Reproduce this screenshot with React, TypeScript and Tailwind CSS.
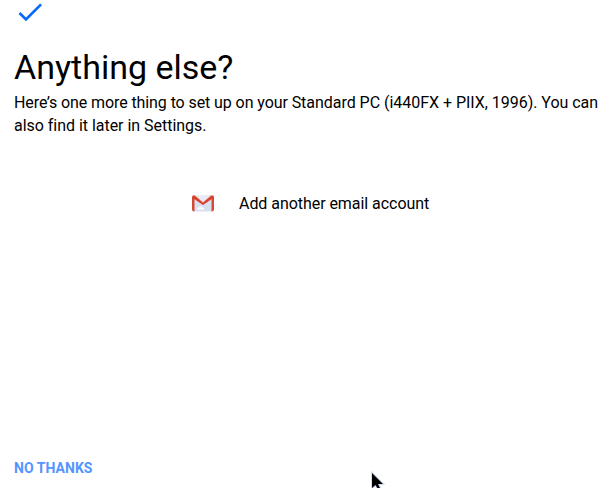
export default function App() {
  return (
    <main className="relative flex h-[488px] w-[600px] flex-col overflow-hidden bg-white font-['Roboto',sans-serif] text-black">
      <svg className="ml-[14px] -mt-[4px] h-8 w-8 shrink-0" viewBox="0 0 24 24" fill="#0868fa" aria-hidden="true">
        <path d="M9 16.17 4.83 12l-1.42 1.41L9 19 21 7l-1.41-1.41z" />
      </svg>
      <h1 className="ml-[14px] mt-[17px] text-[34px] leading-[44px] whitespace-nowrap">Anything else?</h1>
      <p className="ml-[14px] mt-[2px] text-[16px] leading-[23px] tracking-[-0.03px] whitespace-nowrap">
        <span className="tracking-[-0.09px]">Here’s one more thing to set up on your </span>Standard PC (i440FX + PIIX, 1996). You can
        <br />
        also find it later in Settings.
      </p>
      <button className="ml-[191px] mt-[55px] flex h-6 w-fit items-center gap-6 text-[16px] tracking-[-0.05px]">
        <svg className="h-6 w-6" viewBox="0 0.5 24 24" aria-hidden="true">
          <path d="M3 4h18v16H3z" fill="#d9e0f2" />
          <path d="M3 4h18l-9 8z" fill="#e8ecf5" />
          <path d="M6 18v-1.5l2-.5 1.5-1.5 2 1.6 1.5.4V18z" fill="#fff" />
          <path d="M1 5v12.5Q1 20 3.5 20V7zM23 5v12.5q0 2.5-2.5 2.5V7z" fill="#d44a34" />
          <path d="M1 6q0-3 3-1.7l8 6.7 8-6.7q3-1.3 3 1.7l-11 7.6z" fill="#d93d2b" />
          <path d="M1.3 5.1q.8-1.8 2.7-.8l8 6.7 8-6.7q1.9-1 2.7.8" fill="none" stroke="#e68a80" strokeWidth=".8" />
        </svg>
        Add another email account
      </button>
      <button className="mt-auto mb-[10px] ml-[14px] w-fit text-[14px] leading-5 font-bold tracking-[0.04px] text-[#5494ff]">NO THANKS</button>
      <svg className="absolute left-[370px] top-[471px] h-5 w-4" viewBox="0 0 16 20" aria-hidden="true">
        <path d="M2 2v15l3.5-3 3 5 2-1-2.5-5h5z" fill="#000" stroke="#d3def0" strokeWidth="2" paintOrder="stroke" />
      </svg>
    </main>
  );
}
